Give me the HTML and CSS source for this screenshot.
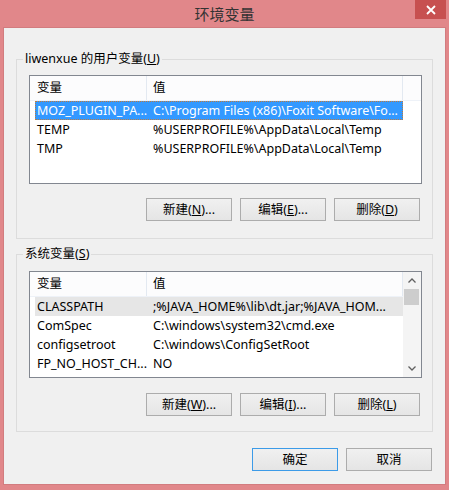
FILE: index.html
```html
<!DOCTYPE html>
<html lang="zh-CN">
<head>
<meta charset="utf-8">
<title>环境变量</title>
<link rel="stylesheet" href="styles.css">
</head>
<body>
<div class="window">
  <div class="titlebar">
    <span class="title">环境变量</span>
    <div class="close">
      <svg width="10" height="10" viewBox="0 0 10 10"><path d="M1 1L9 9M9 1L1 9" stroke="#fff" stroke-width="1.8" fill="none"/></svg>
    </div>
  </div>
  <div class="client">
    <fieldset class="group group-user">
      <legend>liwenxue 的用户变量(<u>U</u>)</legend>
      <div class="list list-user">
        <div class="list-main">
          <div class="header">
            <div class="hcell hc1">变量</div>
            <div class="hcell hc2">值</div>
            <div class="hcell hc3"></div>
          </div>
          <div class="rows">
            <div class="row selected"><span class="c1">MOZ_PLUGIN_PA...</span><span class="c2">C:\Program Files (x86)\Foxit Software\Fo...</span></div>
            <div class="row"><span class="c1">TEMP</span><span class="c2">%USERPROFILE%\AppData\Local\Temp</span></div>
            <div class="row"><span class="c1">TMP</span><span class="c2">%USERPROFILE%\AppData\Local\Temp</span></div>
          </div>
        </div>
      </div>
      <div class="buttons">
        <button class="btn">新建(<u>N</u>)...</button>
        <button class="btn">编辑(<u>E</u>)...</button>
        <button class="btn">删除(<u>D</u>)</button>
      </div>
    </fieldset>

    <fieldset class="group group-sys">
      <legend>系统变量(<u>S</u>)</legend>
      <div class="list list-sys">
        <div class="list-main">
          <div class="header">
            <div class="hcell hc1">变量</div>
            <div class="hcell hc2">值</div>
          </div>
          <div class="rows">
            <div class="row inactive"><span class="c1">CLASSPATH</span><span class="c2">;%JAVA_HOME%\lib\dt.jar;%JAVA_HOM...</span></div>
            <div class="row"><span class="c1">ComSpec</span><span class="c2">C:\windows\system32\cmd.exe</span></div>
            <div class="row"><span class="c1">configsetroot</span><span class="c2">C:\windows\ConfigSetRoot</span></div>
            <div class="row"><span class="c1">FP_NO_HOST_CH...</span><span class="c2">NO</span></div>
          </div>
        </div>
        <div class="scrollbar">
          <div class="sb-arrow">
            <svg width="8" height="5" viewBox="0 0 8 5"><path d="M0.5 4.5L4 1L7.5 4.5" stroke="#606060" stroke-width="1.3" fill="none"/></svg>
          </div>
          <div class="sb-track"><div class="sb-thumb"></div></div>
          <div class="sb-arrow">
            <svg width="8" height="5" viewBox="0 0 8 5"><path d="M0.5 0.5L4 4L7.5 0.5" stroke="#606060" stroke-width="1.3" fill="none"/></svg>
          </div>
        </div>
      </div>
      <div class="buttons">
        <button class="btn">新建(<u>W</u>)...</button>
        <button class="btn">编辑(<u>I</u>)...</button>
        <button class="btn">删除(<u>L</u>)</button>
      </div>
    </fieldset>

    <div class="dialog-buttons">
      <button class="btn btn-default">确定</button>
      <button class="btn">取消</button>
    </div>
  </div>
</div>
</body>
</html>
```

FILE: styles.css
```css
* { box-sizing: border-box; }
html, body { margin: 0; padding: 0; }
body {
  font-family: "Noto Sans", "Noto Sans CJK SC", sans-serif;
  font-size: 12px;
  color: #000;
  background: #e1878a;
}
.window {
  width: 449px;
  height: 490px;
  background: #e1878a;
  padding: 0 3px 5px 3px;
  display: flex;
  flex-direction: column;
}
.titlebar {
  height: 27px;
  position: relative;
  display: flex;
  align-items: center;
  justify-content: center;
  margin: 0 -3px;
}
.title {
  font-family: "Noto Sans CJK SC", sans-serif;
  font-size: 15px;
  color: #333;
  line-height: 20px;
  margin-top: 1px;
}
.close {
  position: absolute;
  top: 0;
  right: 3px;
  width: 31px;
  height: 19px;
  background: #c75050;
  display: flex;
  align-items: center;
  justify-content: center;
}
.client {
  flex: 1;
  background: #f0f0f0;
  border: 1px solid #d27c7f;
  padding: 0 12px 12px 12px;
  display: flex;
  flex-direction: column;
}
.group {
  margin: 0;
  border: 1px solid #dcdcdc;
  padding: 8px 10px 17px 12px;
  min-width: 0;
}
.group-user { margin-top: 23px; height: 188px; }
.group-sys { margin-top: 7px; padding-top: 9px; padding-bottom: 16px; height: 186px; }
legend {
  font-size: 12.5px;
  line-height: 16px;
  padding: 0 2px;
  margin-left: -6px;
  color: #000;
}
.list {
  border: 1px solid #828790;
  background: #fff;
  display: flex;
  overflow: hidden;
}
.list-user { height: 109px; }
.list-sys { height: 107px; }
.list-main {
  flex: 1;
  display: flex;
  flex-direction: column;
  min-width: 0;
}
.header {
  display: flex;
  height: 25px;
  background: #fcfcfd;
  border-bottom: 1px solid #eef2f8;
  flex: none;
}
.hcell {
  line-height: 24px;
  padding-left: 7px;
  border-right: 1px solid #e3e9f1;
  white-space: nowrap;
  font-size: 12.5px;
}
.hc1 { width: 117px; }
.hc2 { width: 256px; padding-left: 6px; }
.hc3 { flex: 1; border-right: none; }
.list-sys .hc2 { flex: 1; }
.rows {
  display: flex;
  flex-direction: column;
  padding-left: 5px;
}
.row {
  display: flex;
  width: 368px;
  height: 19px;
  line-height: 17px;
  font-size: 12.5px;
  border: 1px solid transparent;
  white-space: nowrap;
  flex: none;
}
.row .c1 { width: 111px; padding-left: 1px; overflow: hidden; }
.row .c2 { flex: 1; padding-left: 6px; overflow: hidden; }
.row.selected {
  background: #3399ff;
  color: #fff;
  border: 1px dotted #c07a3a;
}
.row.inactive { background: #e6e6e6; }
.scrollbar {
  width: 18px;
  flex: none;
  background: #f4f4f4;
  display: flex;
  flex-direction: column;
}
.sb-arrow {
  height: 17px;
  display: flex;
  align-items: center;
  justify-content: center;
  flex: none;
}
.sb-track { flex: 1; padding: 0 2px 0 1px; }
.sb-thumb { height: 16px; background: #cdcdcd; }
.buttons {
  display: flex;
  justify-content: flex-end;
  gap: 8px;
  margin-top: 14px;
  padding-right: 2px;
}
.group-sys .buttons { margin-top: 15px; }
.btn {
  width: 86px;
  height: 23px;
  font-family: "Noto Sans", "Noto Sans CJK SC", sans-serif;
  font-size: 12.5px;
  line-height: 20px;
  color: #000;
  background: linear-gradient(#f0f0f0, #e5e5e5);
  border: 1px solid #acacac;
  border-radius: 0;
  padding: 0;
}
.btn-default { border-color: #3c9be8; }
.dialog-buttons {
  display: flex;
  justify-content: flex-end;
  gap: 8px;
  margin-top: 16px;
  padding-right: 1px;
}
```
